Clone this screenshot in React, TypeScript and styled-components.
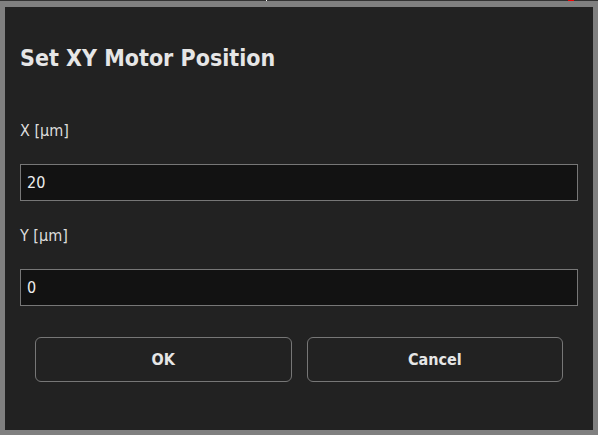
import React from "react";
import styled, { createGlobalStyle } from "styled-components";

const GlobalStyle = createGlobalStyle`
  html, body {
    margin: 0;
    padding: 0;
    background: #808080;
  }
  body {
    font-family: "DejaVu Sans Condensed", "Liberation Sans", sans-serif;
  }
`;

const Frame = styled.div`
  width: 598px;
  height: 435px;
  display: flex;
  flex-direction: column;
  background: #808080;
  box-sizing: border-box;
`;

const TopStrip = styled.div`
  position: relative;
  height: 1px;
  background: #333;
  flex-shrink: 0;
`;

const Mark = styled.span<{ $left: number; $width: number; $color: string }>`
  position: absolute;
  top: 0;
  left: ${(p) => p.$left}px;
  width: ${(p) => p.$width}px;
  height: 1px;
  background: ${(p) => p.$color};
`;

const Dialog = styled.div`
  margin: 6px 5px 5px 5px;
  flex: 1;
  background: #222;
  padding: 0 15px;
  display: flex;
  flex-direction: column;
`;

const Title = styled.h1`
  margin: 37px 0 0 0;
  font-size: 23px;
  font-weight: bold;
  color: #e6e6e6;
  line-height: 28px;
`;

const Label = styled.label<{ $top: number }>`
  display: block;
  margin-top: ${(p) => p.$top}px;
  font-size: 16px;
  color: #ddd;
  line-height: 20px;
`;

const Input = styled.input`
  margin-top: 23px;
  height: 37px;
  box-sizing: border-box;
  width: 100%;
  background: #121212;
  border: 1px solid #777;
  color: #eee;
  font-family: inherit;
  font-size: 16px;
  padding: 0 6px;
  outline: none;
`;

const ButtonRow = styled.div`
  margin-top: 31px;
  padding: 0 15px;
  display: flex;
  gap: 15px;
`;

const Button = styled.button`
  flex: 1;
  height: 45px;
  background: transparent;
  border: 1px solid #777;
  border-radius: 6px;
  color: #e6e6e6;
  font-family: inherit;
  font-size: 16px;
  font-weight: bold;
  cursor: pointer;
`;

export default function App() {
  return (
    <Frame>
      <GlobalStyle />
      <TopStrip>
        <Mark $left={266} $width={1} $color="#fff" />
        <Mark $left={568} $width={6} $color="#e00" />
      </TopStrip>
      <Dialog>
        <Title>Set XY Motor Position</Title>
        <Label $top={49}>X [µm]</Label>
        <Input defaultValue="20" />
        <Label $top={25}>Y [µm]</Label>
        <Input defaultValue="0" />
        <ButtonRow>
          <Button>OK</Button>
          <Button>Cancel</Button>
        </ButtonRow>
      </Dialog>
    </Frame>
  );
}
